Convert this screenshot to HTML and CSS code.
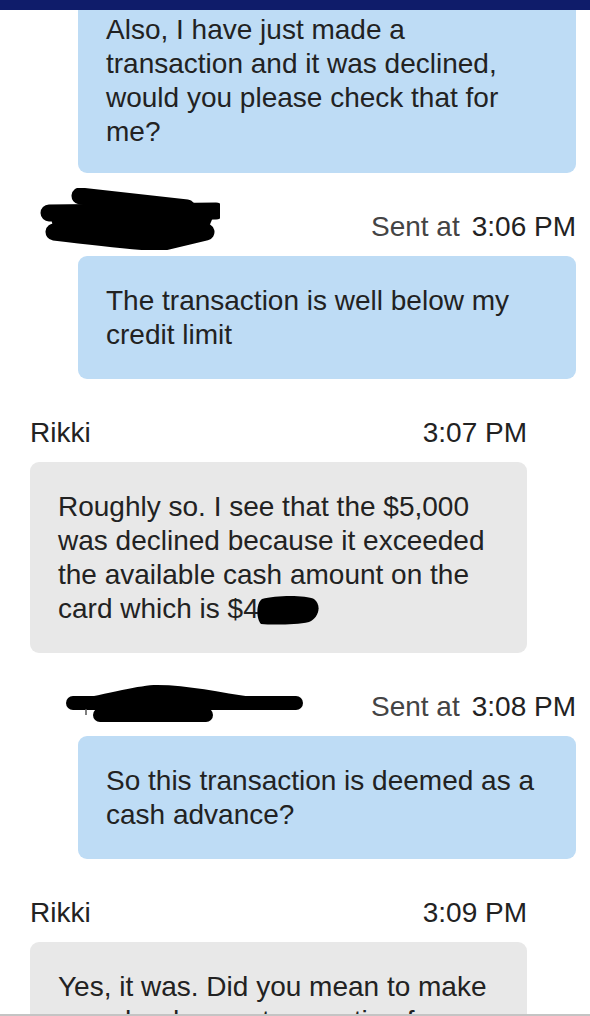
FILE: index.html
```html
<!DOCTYPE html>
<html lang="en">
<head>
<meta charset="utf-8">
<title>Chat</title>
<link rel="stylesheet" href="styles.css">
</head>
<body>
<div class="topbar"></div>
<main class="chat">
  <div class="bubble out first">Also, I have just made a transaction and it was declined, would you please check that for me?</div>

  <div class="meta sent">
    <svg class="redact r1" width="180" height="62" viewBox="0 0 180 62">
      <g stroke="#000" stroke-linecap="round" fill="none">
        <path d="M40 8 L147 20" stroke-width="17"/>
        <path d="M9 25 L176 23" stroke-width="17"/>
        <path d="M14 44 Q80 52 120 55 L166 44" stroke-width="17"/>
      </g>
      <path d="M10 25 L176 22 L166 46 L60 50 L14 44 Z" fill="#000"/>
    </svg>
    <span class="stamp"><span class="label">Sent at</span><span class="time">3:06 PM</span></span>
  </div>
  <div class="bubble out">The transaction is well below my credit limit</div>

  <div class="meta agent"><span>Rikki</span><span class="time">3:07 PM</span></div>
  <div class="bubble in">Roughly so. I see that the $5,000 was declined because it exceeded the available cash amount on the card which is $4<svg class="redact inline" width="64" height="30" viewBox="0 0 64 30"><path d="M6 4 C20 0 50 0 58 4 C66 10 63 23 53 27 C40 30 15 30 5 29 C0 24 0 8 6 4 Z" fill="#000"/></svg></div>

  <div class="meta sent">
    <svg class="redact r2" width="250" height="44" viewBox="0 0 250 44">
      <path d="M10 19 C50 11 80 3 97 3 C130 3 160 11 200 16 L200 22 L10 22 Z" fill="#000"/>
      <g stroke="#000" stroke-linecap="round" fill="none" stroke-width="14">
        <path d="M13 21 L236 21"/>
        <path d="M40 33 L146 33"/>
      </g>
      <path d="M26 27 L26 33" stroke="#555" stroke-width="1.5"/>
    </svg>
    <span class="stamp"><span class="label">Sent at</span><span class="time">3:08 PM</span></span>
  </div>
  <div class="bubble out">So this transaction is deemed as a cash advance?</div>

  <div class="meta agent"><span>Rikki</span><span class="time">3:09 PM</span></div>
  <div class="bubble in">Yes, it was. Did you mean to make a cash advance transaction for $5,000?</div>
</main>
<div class="bottombar"></div>
</body>
</html>
```

FILE: styles.css
```css
html, body {
  margin: 0;
  padding: 0;
  background: #ffffff;
}

body {
  width: 590px;
  height: 1016px;
  overflow: hidden;
  font-family: "Liberation Sans", Arial, Helvetica, sans-serif;
  font-size: 28px;
  line-height: 34px;
  color: #222222;
}

.topbar {
  position: fixed;
  top: 0;
  left: 0;
  right: 0;
  height: 10px;
  background: #0f1c6a;
  z-index: 2;
}

.bottombar {
  position: fixed;
  left: 0;
  right: 0;
  bottom: 0;
  height: 2px;
  background: #c4c4c4;
  z-index: 2;
}

.chat {
  display: flex;
  flex-direction: column;
  padding: 10px 14px 0 30px;
}

.bubble {
  padding: 28px 28px 27px;
  border-radius: 9px;
}

.bubble.out {
  margin-left: 48px;
  background: #bedcf5;
}

.bubble.first {
  padding-top: 3px;
  padding-bottom: 24px;
  border-top-left-radius: 0;
  border-top-right-radius: 0;
}

.bubble.in {
  margin-right: 49px;
  background: #e8e8e8;
}

.meta {
  display: flex;
  justify-content: space-between;
  align-items: flex-start;
  height: 34px;
  margin-top: 37px;
  margin-bottom: 12px;
}

.meta.agent {
  margin-right: 49px;
}

.stamp {
  display: flex;
  gap: 12px;
}

.label {
  color: #444444;
}

.redact {
  display: block;
  flex: none;
}

.redact.r1 {
  margin-left: 10px;
  margin-top: -22px;
}

.redact.r2 {
  margin-left: 30px;
  margin-top: -8px;
}

.redact.inline {
  display: inline-block;
  vertical-align: -7px;
  margin-left: -3px;
}
```
